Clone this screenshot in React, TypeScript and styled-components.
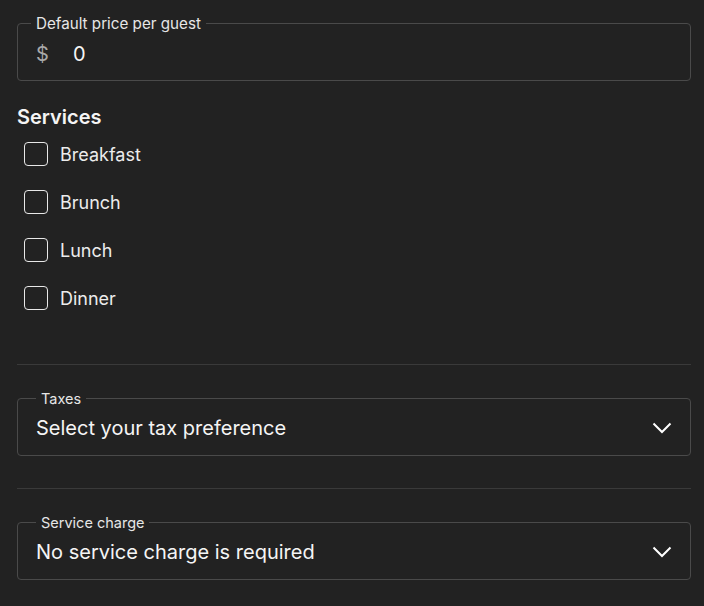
import React from "react";
import styled, { createGlobalStyle } from "styled-components";

const GlobalStyle = createGlobalStyle`
    html, body {
        margin: 0;
        padding: 0;
        background: #222222;
    }
    body {
        font-family: Inter, "Noto Sans", "Liberation Sans", sans-serif;
        color: #f2f2f2;
    }
`;

const Page = styled.div`
    padding: 15px 13px 20px 17px;
    display: flex;
    flex-direction: column;
`;

const Field = styled.fieldset`
    margin: 0;
    padding: 0 18px 0 18px;
    border: 1px solid #4a4a4a;
    border-radius: 4px;
    min-width: 0;
    height: 66px;
    box-sizing: border-box;
    display: block;
`;

const Legend = styled.legend<{ $inset: number; $size: number }>`
    padding: 0 5px;
    margin-left: ${(p) => p.$inset}px;
    font-size: ${(p) => p.$size}px;
    line-height: 17px;
    color: #e6e6e6;
`;

const FieldRow = styled.div<{ $shift: number }>`
    display: flex;
    align-items: center;
    height: 40px;
    gap: 12px;
    margin-top: ${(p) => p.$shift}px;
`;

const Currency = styled.span`
    font-size: 20px;
    color: #a8a8a8;
    width: 25px;
`;

const Value = styled.span`
    flex: 1;
    font-size: 20px;
    color: #f5f5f5;
    white-space: nowrap;
`;

const Chevron = styled.svg`
    width: 20px;
    height: 12px;
    margin-right: 0;
    flex-shrink: 0;
`;

const Heading = styled.h2`
    margin: 24px 0 1px 0;
    font-size: 20px;
    font-weight: 600;
    line-height: 24px;
    color: #f5f5f5;
`;

const CheckList = styled.div`
    display: flex;
    flex-direction: column;
    padding-left: 7px;
`;

const CheckRow = styled.label`
    display: flex;
    align-items: center;
    height: 48px;
    gap: 12px;
    font-size: 18px;
    color: #ececec;
    cursor: pointer;
`;

const Box = styled.span`
    width: 24px;
    height: 24px;
    box-sizing: border-box;
    border: 1.5px solid #e8e8e8;
    border-radius: 4px;
`;

const Divider = styled.hr<{ $top: number; $bottom: number }>`
    border: none;
    border-top: 1px solid #3a3a3a;
    margin: ${(p) => p.$top}px 0 ${(p) => p.$bottom}px 0;
`;

const DownIcon = () => (
    <Chevron viewBox="0 0 20 12" fill="none">
        <polyline points="1.5,1.5 10,10 18.5,1.5" stroke="#ffffff" strokeWidth="2" />
    </Chevron>
);

const services = ["Breakfast", "Brunch", "Lunch", "Dinner"];

const App = () => {
    return (
        <>
            <GlobalStyle />
            <Page>
                <Field>
                    <Legend $inset={-5} $size={15.2}>Default price per guest</Legend>
                    <FieldRow $shift={2}>
                        <Currency>$</Currency>
                        <Value>0</Value>
                    </FieldRow>
                </Field>

                <Heading>Services</Heading>
                <CheckList>
                    {services.map((s) => (
                        <CheckRow key={s}>
                            <Box />
                            {s}
                        </CheckRow>
                    ))}
                </CheckList>

                <Divider $top={42} $bottom={25} />

                <Field>
                    <Legend $inset={0} $size={14.5}>Taxes</Legend>
                    <FieldRow $shift={1}>
                        <Value>Select your tax preference</Value>
                        <DownIcon />
                    </FieldRow>
                </Field>

                <Divider $top={32} $bottom={25} />

                <Field>
                    <Legend $inset={0} $size={14.5}>Service charge</Legend>
                    <FieldRow $shift={1}>
                        <Value>No service charge is required</Value>
                        <DownIcon />
                    </FieldRow>
                </Field>
            </Page>
        </>
    );
};

export default App;
